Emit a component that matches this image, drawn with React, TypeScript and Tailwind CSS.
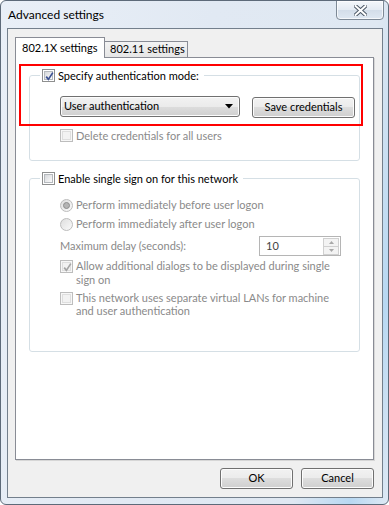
const font = "font-['Lato',sans-serif] text-[11px]"

function CheckBox({ checked = false, disabled = false }: { checked?: boolean; disabled?: boolean }) {
  return (
    <span
      className={`relative flex h-[13px] w-[13px] shrink-0 items-center justify-center border ${
        disabled ? 'border-[#bdbdbd] bg-[#f7f7f7]' : 'border-[#8e8f8f] bg-white'
      }`}
    >
      <span
        className={`h-[9px] w-[9px] border ${
          disabled
            ? 'border-[#dedede] bg-[#f2f2f2]'
            : 'border-[#b5b9bd] bg-gradient-to-br from-[#d6d8db] to-[#fbfbfb]'
        }`}
      />
      {checked && (
        <svg className="absolute left-[1px] top-[1px]" width="11" height="11" viewBox="0 0 11 11">
          <path
            d="M2.2 5.6 L4.4 8.4 L8.8 1.6"
            fill="none"
            stroke={disabled ? '#a5a5a5' : '#3d5293'}
            strokeWidth="1.7"
          />
        </svg>
      )}
    </span>
  )
}

function Radio({ checked = false }: { checked?: boolean }) {
  return (
    <span className="flex h-[13px] w-[13px] shrink-0 items-center justify-center rounded-full border border-[#bcbcbc] bg-gradient-to-br from-[#dedede] to-[#fafafa]">
      {checked && <span className="h-[7px] w-[7px] rounded-full border border-[#8d8d8d] bg-[#b4b4b4]" />}
    </span>
  )
}

function WinButton({ children, className }: { children: React.ReactNode; className?: string }) {
  return (
    <div
      className={`flex h-[21px] items-center justify-center rounded-[3px] border border-[#707070] bg-[linear-gradient(#f2f2f2_0%,#ebebeb_50%,#dddddd_50%,#cfcfcf_100%)] text-black shadow-[inset_0_0_0_1px_#fcfcfc] ${className ?? ''}`}
    >
      {children}
    </div>
  )
}

export default function App() {
  return (
    <div className={`${font} flex h-[505px] w-[389px] flex-col overflow-hidden rounded-[6px] border border-[#5d6a79] bg-[linear-gradient(100deg,#e9eff7_0%,#e1e9f3_45%,#dfe8f2_80%,#b8d8f2_92%,#dfe9f4_100%)] pb-[6px] pl-[6px] pr-[5px] text-black`}>
      {/* title bar */}
      <div className="flex h-[27px] shrink-0 items-start justify-between">
        <span className="pl-[1px] pt-[7px] text-[12px] leading-[14px] text-black">Advanced settings</span>
        <div className="-mt-px mr-[-1px] flex h-[20px] w-[48px] items-center justify-center rounded-b-[4px] border border-[#7d8996] bg-[linear-gradient(#f4f7fb_0%,#e4ebf3_50%,#d3dde9_50%,#dfe8f2_100%)] shadow-[inset_0_0_0_1px_rgba(255,255,255,0.7)]">
          <svg width="13" height="11" viewBox="0 0 13 11">
            <path d="M1.5 1 L11.5 10 M11.5 1 L1.5 10" stroke="#4c5866" strokeWidth="4" strokeLinecap="square" />
            <path d="M1.5 1 L11.5 10 M11.5 1 L1.5 10" stroke="#ffffff" strokeWidth="2" strokeLinecap="square" />
          </svg>
        </div>
      </div>

      {/* client area */}
      <div className="flex flex-1 flex-col border border-[#737f8c] bg-[#f0f0f0] pb-[8px] pl-[7px] pr-[8px] pt-[8px]">
        {/* tabs */}
        <div className="flex h-[20px] shrink-0 items-end whitespace-nowrap">
          <div className="relative z-10 -mb-px flex h-[21px] w-[90px] items-center border border-b-0 border-[#898c95] bg-white pl-[6px]">
            802.1X settings
          </div>
          <div className="-ml-px flex h-[16px] w-[84px] items-center border border-b-0 border-[#898c95] bg-[linear-gradient(#f3f3f3,#e6e6e6)] pl-[5px]">
            802.11 settings
          </div>
        </div>

        {/* tab panel */}
        <div className="relative flex-1 border border-[#898c95] bg-white pl-[13px] pt-[11px] shadow-[1px_1px_0_#d6d6d6]">
          <fieldset className="w-[331px] rounded-[3px] border border-[#d5dfe5] pb-[18px] pl-[30px]">
            <legend className="-ml-[20px] flex h-[13px] items-center gap-[3px] pl-[2px] pr-[5px] leading-[13px]">
              <CheckBox checked />
              <span>Specify authentication mode:</span>
            </legend>
            <div className="mt-[13px] flex items-center gap-[12px]">
              <div className="flex h-[21px] w-[180px] items-center justify-between rounded-[3px] border border-[#707070] bg-[linear-gradient(#f2f2f2_0%,#ebebeb_50%,#dddddd_50%,#cfcfcf_100%)] pl-[3px] pr-[6px] shadow-[inset_0_0_0_1px_#fcfcfc]">
                <span>User authentication</span>
                <svg width="8" height="5" viewBox="0 0 8 5">
                  <path d="M0 0 L8 0 L4 4.5 Z" fill="#000" />
                </svg>
              </div>
              <WinButton className="mt-[2px] w-[103px]">Save credentials</WinButton>
            </div>
            <div className="mt-[11px] flex items-center gap-[3px] leading-[13px] text-[#8a8a8a]">
              <CheckBox disabled />
              <span>Delete credentials for all users</span>
            </div>
          </fieldset>

          <fieldset className="mt-[11px] w-[331px] rounded-[3px] border border-[#d5dfe5] pb-[34px] pl-[30px]">
            <legend className="-ml-[20px] flex h-[13px] items-center gap-[3px] pl-[2px] pr-[5px] leading-[13px]">
              <CheckBox />
              <span>Enable single sign on for this network</span>
            </legend>
            <div className="flex flex-col text-[#8a8a8a]">
              <div className="mt-[14px] flex h-[13px] items-center gap-[3px]">
                <Radio checked />
                <span>Perform immediately before user logon</span>
              </div>
              <div className="mt-[6px] flex h-[13px] items-center gap-[3px]">
                <Radio />
                <span>Perform immediately after user logon</span>
              </div>
              <div className="mt-[5px] flex h-[20px] items-center justify-between pr-[18px]">
                <span>Maximum delay (seconds):</span>
                <div className="flex h-[20px] w-[82px] items-center justify-between border border-[#b5b5b5] bg-white pl-[6px] pr-[1px] text-[#444]">
                  <span>10</span>
                  <div className="flex h-[17px] w-[16px] flex-col">
                    <div className="flex flex-1 items-center justify-center border border-[#d0d0d0] bg-[#f3f3f3]">
                      <svg width="5" height="3" viewBox="0 0 5 3">
                        <path d="M0 3 L5 3 L2.5 0 Z" fill="#a8a8a8" />
                      </svg>
                    </div>
                    <div className="-mt-px flex flex-1 items-center justify-center border border-[#d0d0d0] bg-[#f3f3f3]">
                      <svg width="5" height="3" viewBox="0 0 5 3">
                        <path d="M0 0 L5 0 L2.5 3 Z" fill="#a8a8a8" />
                      </svg>
                    </div>
                  </div>
                </div>
              </div>
              <div className="mt-[4px] flex items-start gap-[3px] leading-[14px]">
                <CheckBox checked disabled />
                <span className="-mt-px">
                  Allow additional dialogs to be displayed during single
                  <br />
                  sign on
                </span>
              </div>
              <div className="mt-[5px] flex items-start gap-[3px] leading-[13px]">
                <CheckBox disabled />
                <span className="-mt-[1px]">
                  This network uses separate virtual LANs for machine
                  <br />
                  and user authentication
                </span>
              </div>
            </div>
          </fieldset>

          {/* annotation box */}
          <div className="absolute left-[3px] top-[6px] h-[62px] w-[344px] border-2 border-[#ff0000]" />
        </div>

        {/* buttons */}
        <div className="mt-[8px] flex shrink-0 justify-end gap-[8px]">
          <WinButton className="w-[73px]">OK</WinButton>
          <WinButton className="w-[73px]">Cancel</WinButton>
        </div>
      </div>
    </div>
  )
}
